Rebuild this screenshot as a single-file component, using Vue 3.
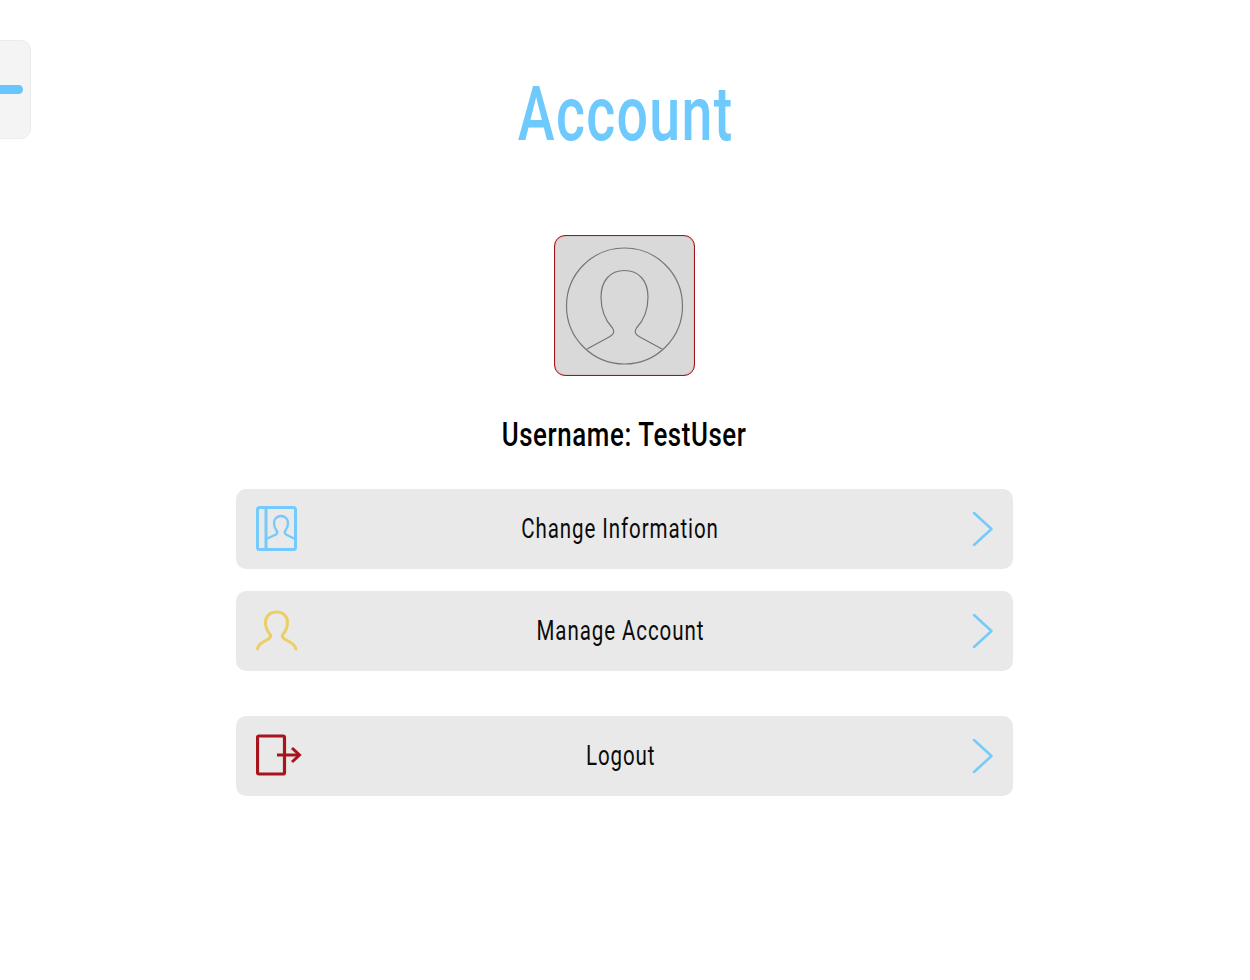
<script setup>
const rows = [
  { label: 'Change Information', icon: 'book' },
  { label: 'Manage Account', icon: 'user' },
  { label: 'Logout', icon: 'logout' },
]
</script>

<template>
  <div class="page">
    <div class="side-tab"><span class="side-dash"></span></div>

    <h1 class="title"><span>Account</span></h1>

    <div class="avatar">
      <svg viewBox="0 0 141 141" width="141" height="141" fill="none" stroke="#767676" stroke-width="1.200">
        <circle cx="70.5" cy="71" r="58" />
        <path d="M33 114 L56 101.500 C60 99 61 96.500 58.500 93 C51 85 47 76 47 62 C47 46 56 35.500 70.500 35.500 C85 35.500 94 46 94 62 C94 76 90 85 82.500 93 C80 96.500 81 99 85 101.500 L108 114" />
      </svg>
    </div>

    <p class="username"><span>Username: TestUser</span></p>

    <div class="menu">
      <div v-for="row in rows" :key="row.label" class="row" :class="{ 'row-logout': row.icon === 'logout' }">
        <div class="row-icon">
          <svg v-if="row.icon === 'book'" viewBox="0 0 44 46" width="44" height="46" fill="none" stroke="#74cbfb" stroke-width="3">
            <rect x="1.500" y="1.500" width="38" height="42" rx="2" />
            <path d="M10 2 V43" />
            <path d="M10 33 L20 28.500 C21.500 27.500 21.500 26 20.500 24.500 C19 22.500 18 20 18 17 C18 13 21 10 25 10 C29 10 32 13 32 17 C32 20 31 22.500 29.500 24.500 C28.500 26 28.500 27.500 30 28.500 L39 33" stroke-width="2.400" />
          </svg>
          <svg v-else-if="row.icon === 'user'" viewBox="0 0 44 46" width="44" height="46" fill="none" stroke="#ead064" stroke-width="3" stroke-linecap="round">
            <path d="M1.500 41 C2 37 4 35.500 8 33.500 C12 31.500 15.500 30 14.500 27 C11 23 9.500 19.500 9.500 14.500 C9.500 8 14 4 20.500 4 C27 4 31.500 8 31.500 14.500 C31.500 19.500 30 23 26.500 27 C25.500 30 29 31.500 33 33.500 C37 35.500 39 37 40 41" />
          </svg>
          <svg v-else viewBox="0 0 46 46" width="46" height="46" fill="none" stroke="#a8141c" stroke-width="3">
            <rect x="1.500" y="3" width="27" height="38" rx="1.500" stroke-width="3.200" />
            <path d="M21 22 H43" />
            <path d="M36 15 L43.500 22 L36 29" />
          </svg>
        </div>
        <div class="row-label"><span>{{ row.label }}</span></div>
        <div class="row-arrow">
          <svg viewBox="0 0 22 38" width="22" height="38" fill="none" stroke="#74cbfb" stroke-width="2.500" stroke-linecap="round" stroke-linejoin="round">
            <path d="M2 3 L19.500 19 L2 35" />
          </svg>
        </div>
      </div>
    </div>
  </div>
</template>

<style scoped>
.page {
  position: relative;
  width: 1249px;
  height: 980px;
  background: #ffffff;
  display: flex;
  flex-direction: column;
  align-items: center;
  font-family: Roboto, "Liberation Sans", sans-serif;
  overflow: hidden;
}

.side-tab {
  position: absolute;
  left: -21px;
  top: 40px;
  width: 50px;
  height: 97px;
  background: #f4f4f4;
  border: 1px solid #ececec;
  border-radius: 10px;
  display: flex;
  align-items: center;
}

.side-dash {
  display: block;
  margin-left: 11px;
  width: 32px;
  height: 9px;
  border-radius: 5px;
  background: #66c6fd;
}

.title {
  margin: 64px 0 0;
  padding-left: 3px;
  height: 100px;
  line-height: 100px;
  font-size: 76px;
  font-weight: 500;
  letter-spacing: 1.8px;
  color: #6ec9fd;
  text-align: center;
}

.title span {
  display: inline-block;
  transform: scaleX(0.73);
}

.avatar {
  margin-top: 71px;
  width: 141px;
  height: 141px;
  box-sizing: border-box;
  background: #d9d9d9;
  border: 1px solid #a2141c;
  border-radius: 11px;
  box-shadow: inset 0 0 1px rgba(162, 20, 28, 0.7);
  display: flex;
  align-items: center;
  justify-content: center;
}

.avatar svg {
  flex: none;
}

.username {
  margin: 38px 0 0;
  height: 40px;
  line-height: 40px;
  font-size: 34px;
  font-weight: 500;
  letter-spacing: 0.8px;
  color: #000000;
}

.username span {
  display: inline-block;
  transform: scaleX(0.76);
}

.menu {
  margin-top: 35px;
  width: 777px;
  display: flex;
  flex-direction: column;
  gap: 22px;
}

.row {
  height: 80px;
  padding: 0 19px 0 20px;
  background: #e9e9e9;
  border-radius: 10px;
  display: flex;
  align-items: center;
}

.row-logout {
  margin-top: 23px;
}

.row-icon {
  width: 44px;
  height: 46px;
}

.row-label {
  flex: 1;
  text-align: center;
  font-size: 27px;
  letter-spacing: 1.2px;
  color: #0b0b0b;
}

.row-label span {
  display: inline-block;
  transform: scaleX(0.76);
}

.row-arrow {
  width: 53px;
  display: flex;
  justify-content: flex-end;
}
</style>
